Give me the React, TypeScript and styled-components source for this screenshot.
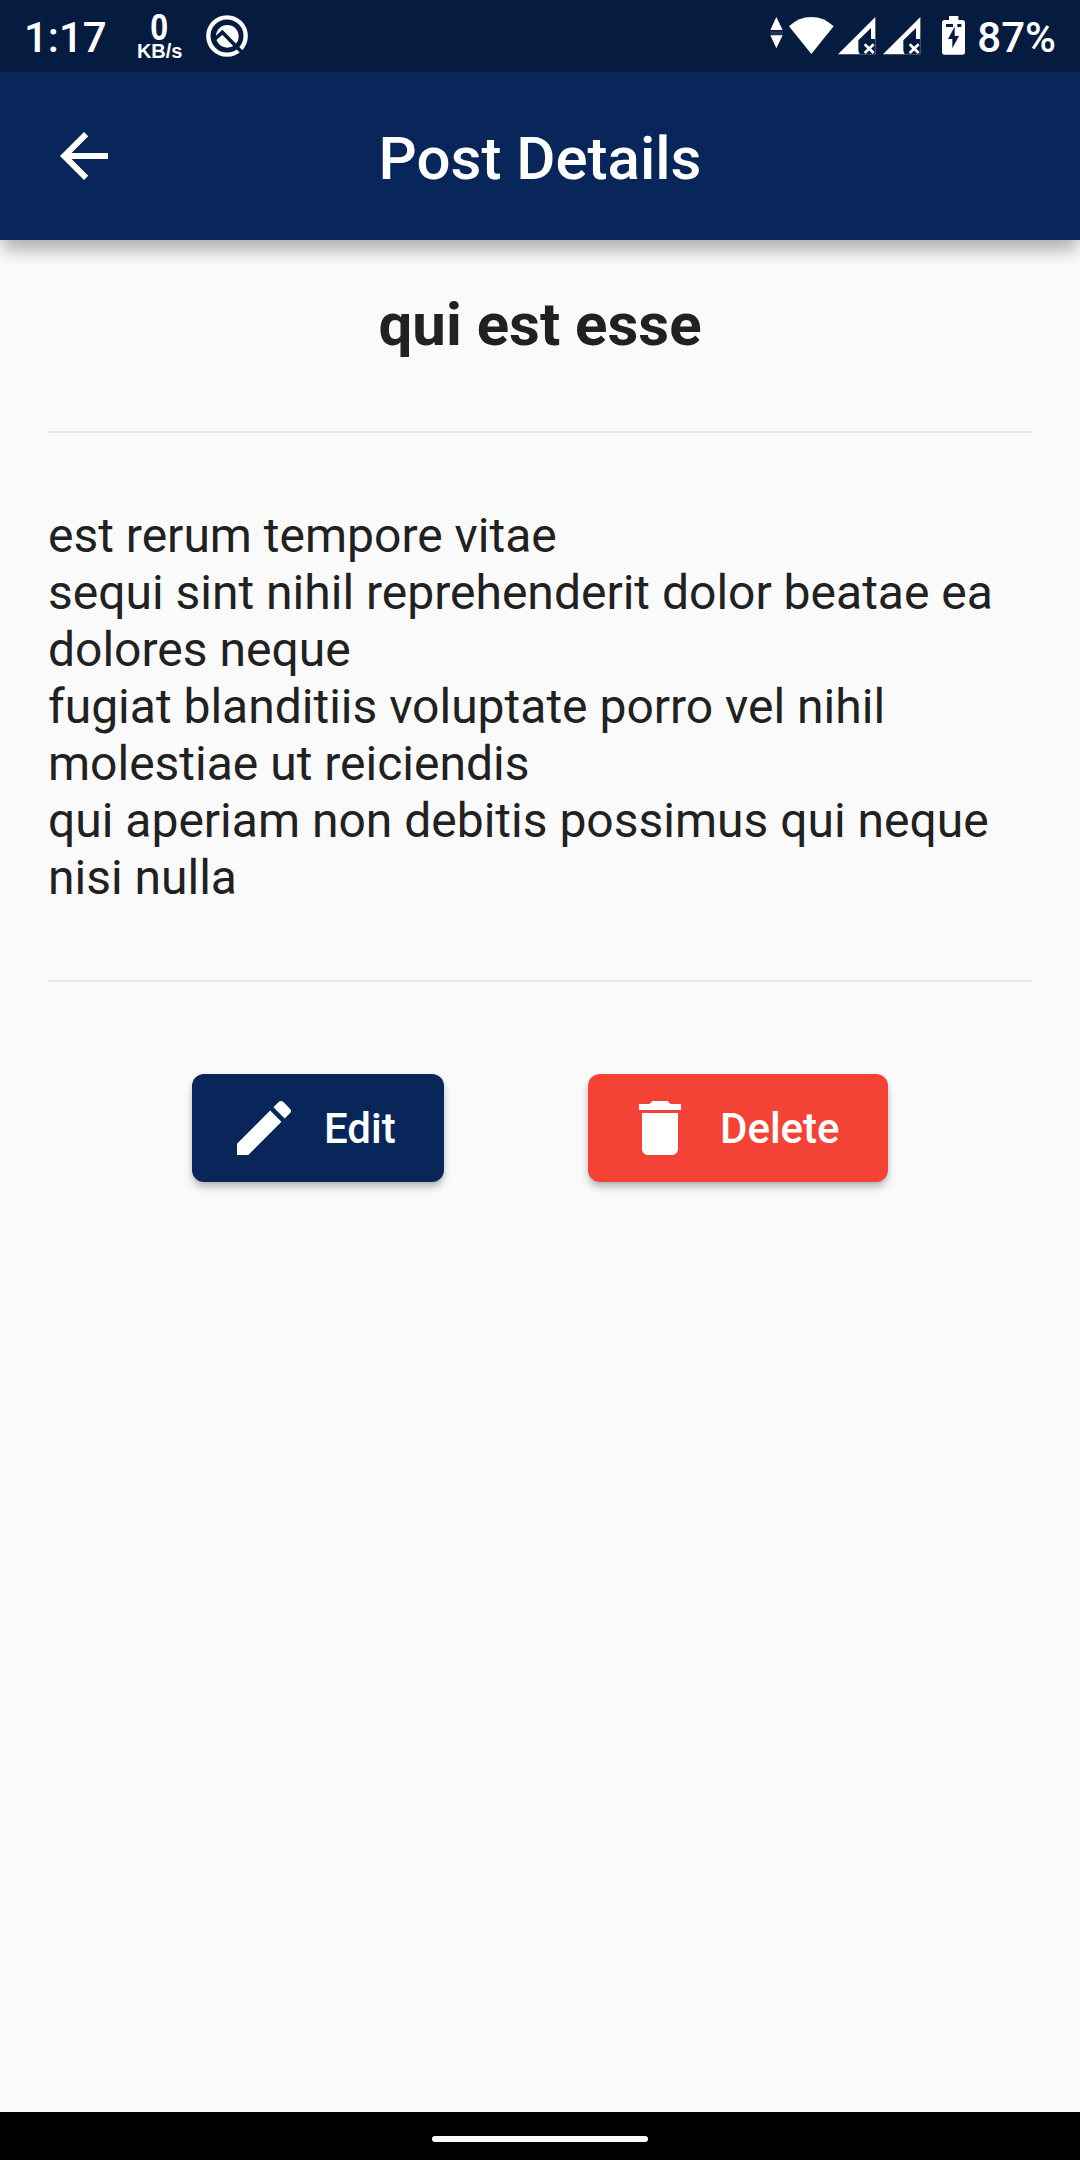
import React from "react";
import styled, { createGlobalStyle } from "styled-components";

const NAVY = "#08265a";

const GlobalStyle = createGlobalStyle`
  * { box-sizing: border-box; }
  body { margin: 0; background: #fafafa; font-family: Roboto, "Noto Sans", sans-serif; }
`;

const Screen = styled.div`
  display: flex;
  flex-direction: column;
  width: 1080px;
  height: 2160px;
  overflow: hidden;
  background: #fafafa;
`;

const StatusBar = styled.header`
  display: flex;
  align-items: center;
  justify-content: space-between;
  flex: none;
  height: 72px;
  padding: 0 24px;
  background: #061b40;
  color: #fff;
`;

const StatusGroup = styled.div<{ $gap?: number }>`
  display: flex;
  align-items: center;
  height: 72px;
  gap: ${(p) => p.$gap ?? 0}px;
`;

const StatusText = styled.span`
  font-size: 42px;
  font-weight: 500;
  line-height: 50px;
  padding-top: 3px;
`;

const NetSpeed = styled.div`
  display: flex;
  flex-direction: column;
  align-items: center;
  width: 46px;
  margin: 0 22px 0 30px;
  font-family: "Liberation Sans", Arial, sans-serif;
  font-weight: 700;
`;

const SpeedValue = styled.span`
  font-size: 37px;
  line-height: 29px;
  height: 29px;
  transform: scaleX(0.87);
`;

const SpeedUnit = styled.span`
  font-size: 20px;
  line-height: 19px;
  height: 18px;
`;

const AppBar = styled.nav`
  display: grid;
  grid-template-columns: 72px 1fr 72px;
  align-items: center;
  flex: none;
  height: 168px;
  padding: 0 48px;
  background: ${NAVY};
  color: #fff;
  box-shadow: 0 13px 16px -3px rgba(0, 0, 0, 0.3);
`;

const BarTitle = styled.h1`
  margin: 0;
  padding-top: 5px;
  text-align: center;
  font-size: 60px;
  font-weight: 500;
  line-height: 71px;
`;

const Content = styled.main`
  flex: 1;
  padding: 50px 48px 48px;
`;

const PostTitle = styled.h2`
  margin: 0;
  text-align: center;
  color: #212121;
  font-size: 60px;
  font-weight: 700;
  line-height: 70px;
`;

const Divider = styled.hr<{ $before: number }>`
  height: 2px;
  margin: ${(p) => p.$before}px 0 74px;
  border: 0;
  background: #e9e9e9;
`;

const PostBody = styled.p`
  margin: 0;
  color: #212121;
  font-size: 48px;
  line-height: 57px;
  white-space: pre-line;
`;

const Actions = styled.div`
  display: flex;
  justify-content: space-evenly;
  align-items: center;
  height: 144px;
`;

const ActionButton = styled.button<{ $color: string; $width: number }>`
  display: flex;
  align-items: center;
  gap: 24px;
  width: ${(p) => p.$width}px;
  height: 108px;
  padding: 0 0 0 36px;
  border: 0;
  border-radius: 12px;
  background: ${(p) => p.$color};
  color: #fff;
  font: 500 42px/50px Roboto, "Noto Sans", sans-serif;
  box-shadow: 0 6px 8px -1px rgba(0, 0, 0, 0.26), 0 1px 6px rgba(0, 0, 0, 0.08);
`;

const ButtonLabel = styled.span`
  padding-top: 2px;
`;

const MaterialIcon = styled.svg`
  display: block;
  width: 72px;
  height: 72px;
  fill: currentColor;
`;

const NavigationBar = styled.footer`
  display: flex;
  align-items: center;
  justify-content: center;
  flex: none;
  height: 48px;
  padding-top: 6px;
  background: #000;
`;

const HomeHandle = styled.div`
  width: 216px;
  height: 6px;
  border-radius: 3px;
  background: #fff;
`;

const Glyph = styled.svg`
  display: block;
  flex: none;
`;

const PostAppIcon = () => (
  <Glyph width="44" height="44" viewBox="0 0 132 132" fill="none">
    <circle cx="66" cy="66" r="56" stroke="#fff" strokeWidth="13" />
    <circle cx="67" cy="67" r="34" fill="#fff" />
    <path d="M30 75 L52 55 L110 114" stroke="#061b40" strokeWidth="11" />
  </Glyph>
);

const SystemIcons = () => (
  <Glyph width="196" height="72" viewBox="0 0 588 216" fill="#fff">
    <path d="M19 51 L38 90 H1 Z M1 106 H38 L19 145 Z" />
    <path d="M1 96.500H39 M1 102H39" stroke="#56657f" strokeWidth="2" />
    <path d="M57 79 Q86 51 124 51 T191 79 L124 162 Z" />
    {[0, 135].map((x) => (
      <g key={x} transform={`translate(${x} 0)`}>
        <path d="M204 163 L316 51 V117 H303 V84 L265 121 V152 L269 163 Z" />
        <path d="M316 117 V163 H269" fill="none" stroke="#6d7a90" strokeWidth="2" />
        <path d="M284 133 L311 159 M311 133 L284 159" stroke="#fff" strokeWidth="8" />
      </g>
    ))}
    <path d="M537 48 H565 V60 H577 Q585 60 585 68 V156 Q585 164 577 164 H524 Q516 164 516 156 V68 Q516 60 524 60 H537 Z" />
    <path d="M528 72 H549 V81 H528 Z M562 72 H574 V81 H562 Z M554 80 V108 H567 L547 145 V117 H534 Z" fill="#061b40" />
  </Glyph>
);

const body = `est rerum tempore vitae
sequi sint nihil reprehenderit dolor beatae ea dolores neque
fugiat blanditiis voluptate porro vel nihil molestiae ut reiciendis
qui aperiam non debitis possimus qui neque nisi nulla`;

export default function App() {
  return (
    <>
      <GlobalStyle />
      <Screen>
        <StatusBar>
          <StatusGroup>
            <StatusText>1:17</StatusText>
            <NetSpeed>
              <SpeedValue>0</SpeedValue>
              <SpeedUnit>KB/s</SpeedUnit>
            </NetSpeed>
            <PostAppIcon />
          </StatusGroup>
          <StatusGroup $gap={11}>
            <SystemIcons />
            <StatusText>87%</StatusText>
          </StatusGroup>
        </StatusBar>
        <AppBar>
          <MaterialIcon viewBox="0 0 24 24">
            <path d="M20 11H7.830l5.590-5.590L12 4l-8 8 8 8 1.410-1.410L7.830 13H20v-2z" />
          </MaterialIcon>
          <BarTitle>Post Details</BarTitle>
        </AppBar>
        <Content>
          <PostTitle>qui est esse</PostTitle>
          <Divider $before={71} />
          <PostBody>{body}</PostBody>
          <Divider $before={74} />
          <Actions>
            <ActionButton $color={NAVY} $width={252}>
              <MaterialIcon viewBox="0 0 24 24">
                <path d="M3 17.250V21h3.750L17.810 9.940l-3.750-3.750L3 17.250zM20.710 7.040c.39-.39.39-1.020 0-1.410l-2.340-2.340c-.39-.39-1.020-.39-1.410 0l-1.830 1.830 3.750 3.750 1.830-1.830z" />
              </MaterialIcon>
              <ButtonLabel>Edit</ButtonLabel>
            </ActionButton>
            <ActionButton $color="#f44336" $width={300}>
              <MaterialIcon viewBox="0 0 24 24">
                <path d="M6 19c0 1.100.9 2 2 2h8c1.100 0 2-.9 2-2V7H6v12zM19 4h-3.500l-1-1h-5l-1 1H5v2h14V4z" />
              </MaterialIcon>
              <ButtonLabel>Delete</ButtonLabel>
            </ActionButton>
          </Actions>
        </Content>
        <NavigationBar>
          <HomeHandle />
        </NavigationBar>
      </Screen>
    </>
  );
}
